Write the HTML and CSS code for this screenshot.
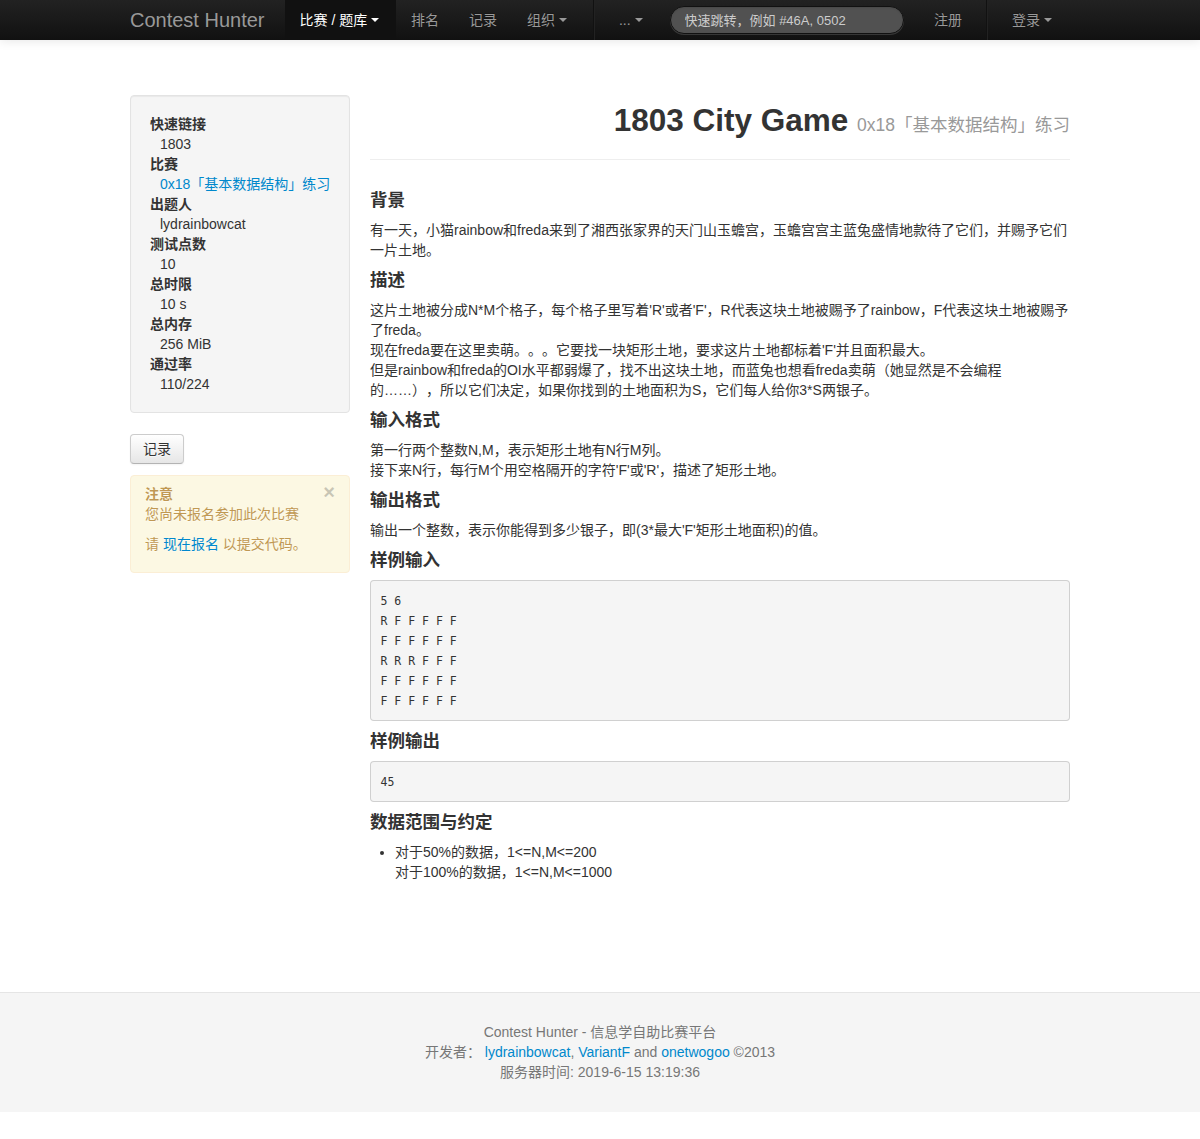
FILE: index.html
```html
<!DOCTYPE html>
<html lang="zh-CN">
<head>
<meta charset="utf-8">
<title>1803 City Game - Contest Hunter</title>
<link rel="stylesheet" href="styles.css">
</head>
<body>
<div class="navbar">
  <div class="nav-inner">
    <a class="brand" href="#">Contest Hunter</a>
    <ul class="nav">
      <li class="active"><a href="#">比赛 / 题库 <b class="caret"></b></a></li>
      <li><a href="#">排名</a></li>
      <li><a href="#">记录</a></li>
      <li><a href="#">组织 <b class="caret"></b></a></li>
      <li class="divider"></li>
      <li><a href="#">... <b class="caret"></b></a></li>
    </ul>
    <form class="search-form"><input class="search-query" type="text" placeholder="快速跳转，例如 #46A, 0502"></form>
    <ul class="nav nav-right">
      <li><a href="#">注册</a></li>
      <li class="divider"></li>
      <li><a href="#">登录 <b class="caret"></b></a></li>
    </ul>
  </div>
</div>

<div class="container">
  <div class="sidebar">
    <div class="well">
      <div class="info-label">快速链接</div>
      <div class="info-value">1803</div>
      <div class="info-label">比赛</div>
      <div class="info-value"><a href="#">0x18「基本数据结构」练习</a></div>
      <div class="info-label">出题人</div>
      <div class="info-value">lydrainbowcat</div>
      <div class="info-label">测试点数</div>
      <div class="info-value">10</div>
      <div class="info-label">总时限</div>
      <div class="info-value">10 s</div>
      <div class="info-label">总内存</div>
      <div class="info-value">256 MiB</div>
      <div class="info-label">通过率</div>
      <div class="info-value">110/224</div>
    </div>
    <div class="btn-row"><a class="btn" href="#">记录</a></div>
    <div class="alert">
      <button class="close" type="button">×</button>
      <strong class="alert-title">注意</strong>
      <div>您尚未报名参加此次比赛</div>
      <p class="alert-p">请 <a href="#">现在报名</a> 以提交代码。</p>
    </div>
  </div>

  <div class="content">
    <div class="page-header">
      <h2>1803 City Game <small>0x18「基本数据结构」练习</small></h2>
    </div>
    <h4>背景</h4>
    <p>有一天，小猫rainbow和freda来到了湘西张家界的天门山玉蟾宫，玉蟾宫宫主蓝兔盛情地款待了它们，并赐予它们一片土地。</p>
    <h4>描述</h4>
    <p>这片土地被分成N*M个格子，每个格子里写着'R'或者'F'，R代表这块土地被赐予了rainbow，F代表这块土地被赐予了freda。<br>现在freda要在这里卖萌。。。它要找一块矩形土地，要求这片土地都标着'F'并且面积最大。<br>但是rainbow和freda的OI水平都弱爆了，找不出这块土地，而蓝兔也想看freda卖萌（她显然是不会编程<br>的……），所以它们决定，如果你找到的土地面积为S，它们每人给你3*S两银子。</p>
    <h4>输入格式</h4>
    <p>第一行两个整数N,M，表示矩形土地有N行M列。<br>接下来N行，每行M个用空格隔开的字符'F'或'R'，描述了矩形土地。</p>
    <h4>输出格式</h4>
    <p>输出一个整数，表示你能得到多少银子，即(3*最大'F'矩形土地面积)的值。</p>
    <h4>样例输入</h4>
    <pre>5 6
R F F F F F
F F F F F F
R R R F F F
F F F F F F
F F F F F F</pre>
    <h4>样例输出</h4>
    <pre>45</pre>
    <h4>数据范围与约定</h4>
    <ul class="constraints">
      <li>对于50%的数据，1&lt;=N,M&lt;=200<br>对于100%的数据，1&lt;=N,M&lt;=1000</li>
    </ul>
  </div>
</div>

<div class="footer">
  <div>Contest Hunter - 信息学自助比赛平台</div>
  <div>开发者： <a href="#">lydrainbowcat</a>, <a href="#">VariantF</a> and <a href="#">onetwogoo</a> ©2013</div>
  <div>服务器时间: 2019-6-15 13:19:36</div>
</div>
</body>
</html>
```
FILE: styles.css
```css
html, body {
  margin: 0;
  padding: 0;
}
body {
  font-family: "Liberation Sans", Arial, "Noto Sans CJK SC", sans-serif;
  font-size: 14px;
  line-height: 20px;
  color: #333;
  background: #fff;
  text-spacing-trim: space-all;
}
a {
  color: #0088cc;
  text-decoration: none;
}

/* navbar */
.navbar {
  height: 40px;
  background: linear-gradient(to bottom, #222222, #111111);
  box-shadow: 0 1px 10px rgba(0, 0, 0, 0.1);
}
.nav-inner {
  width: 940px;
  margin: 0 auto;
  display: flex;
  height: 40px;
}
.brand {
  margin-left: -20px;
  padding: 10px 20px;
  font-size: 20px;
  line-height: 20px;
  color: #999;
}
.nav {
  display: flex;
  list-style: none;
  margin: 0;
  padding: 0;
}
.nav a {
  display: block;
  padding: 10px 15px;
  line-height: 20px;
  color: #999;
  text-shadow: 0 -1px 0 rgba(0, 0, 0, 0.25);
}
.nav .active a {
  padding-right: 17px;
  background: #111;
  color: #fff;
}
.caret {
  display: inline-block;
  width: 0;
  height: 0;
  vertical-align: top;
  margin-top: 8px;
  border-top: 4px solid #999;
  border-left: 4px solid transparent;
  border-right: 4px solid transparent;
}
.nav .active .caret {
  border-top-color: #fff;
}
.nav .divider {
  width: 0;
  height: 40px;
  margin: 0 9px 0 11px;
  border-left: 1px solid #111;
  border-right: 1px solid #222;
}
.nav-right .divider {
  margin: 0 9px;
}
.search-form {
  margin: 6px 0 0 12px;
}
.search-query {
  display: block;
  box-sizing: border-box;
  width: 234px;
  height: 28px;
  margin: 0;
  padding: 4px 14px;
  font-family: "Liberation Sans", Arial, "Noto Sans CJK SC", sans-serif;
  font-size: 13px;
  line-height: 18px;
  color: #fff;
  background: #515151;
  border: 1px solid #111;
  border-radius: 15px;
  box-shadow: inset 0 1px 2px rgba(0, 0, 0, 0.1), 0 1px 0 rgba(255, 255, 255, 0.15);
  outline: none;
}
.search-query::placeholder {
  color: #ccc;
}
.nav-right {
  margin-left: auto;
}
.nav-right li:last-child a {
  padding-right: 18px;
}

/* layout */
.container {
  width: 940px;
  margin: 0 auto;
  padding-top: 55px;
  display: flex;
  gap: 20px;
  align-items: flex-start;
}
.sidebar {
  width: 220px;
  flex: none;
}
.content {
  width: 700px;
  flex: none;
}

/* sidebar */
.well {
  background: #f5f5f5;
  border: 1px solid #e3e3e3;
  border-radius: 4px;
  padding: 18px 19px;
  box-shadow: inset 0 1px 1px rgba(0, 0, 0, 0.05);
}
.info-label {
  font-weight: bold;
  color: #333;
}
.info-value {
  padding-left: 10px;
  color: #333;
  white-space: nowrap;
}
.btn-row {
  margin: 21px 0 11px;
}
.btn {
  display: inline-block;
  padding: 4px 12px;
  font-size: 14px;
  line-height: 20px;
  color: #333;
  text-shadow: 0 1px 1px rgba(255, 255, 255, 0.75);
  background: linear-gradient(to bottom, #ffffff, #e6e6e6);
  border: 1px solid #ccc;
  border-bottom-color: #b3b3b3;
  border-radius: 4px;
  box-shadow: inset 0 1px 0 rgba(255, 255, 255, 0.2), 0 1px 2px rgba(0, 0, 0, 0.05);
}
.alert {
  padding: 8px 35px 8px 14px;
  background: #fcf8e3;
  border: 1px solid #fbeed5;
  border-radius: 4px;
  color: #c09853;
  text-shadow: 0 1px 0 rgba(255, 255, 255, 0.5);
}
.alert-title {
  display: block;
}
.alert-p {
  margin: 10px 0;
}
.close {
  float: right;
  position: relative;
  top: -2px;
  right: -21px;
  padding: 0;
  border: 0;
  background: transparent;
  font-family: "Liberation Sans", Arial, sans-serif;
  font-size: 20px;
  font-weight: bold;
  line-height: 20px;
  color: #000;
  opacity: 0.2;
  text-shadow: 0 1px 0 #fff;
  cursor: pointer;
}

/* content */
.page-header {
  margin: 0 0 30px;
  padding-bottom: 9px;
  border-bottom: 1px solid #eee;
  text-align: right;
}
.page-header h2 {
  margin: 5px 0 10px;
  font-size: 31.5px;
  line-height: 40px;
  font-weight: bold;
  color: #333;
}
.page-header small {
  font-size: 17.5px;
  line-height: 1;
  font-weight: normal;
  color: #999;
}
h4 {
  margin: 10px 0;
  font-size: 17.5px;
  line-height: 20px;
  font-weight: bold;
  color: #333;
}
p {
  margin: 0 0 10px;
}
pre {
  margin: 0 0 10px;
  padding: 9.5px;
  font-family: "DejaVu Sans Mono", "Liberation Mono", monospace;
  font-size: 11.5px;
  line-height: 20px;
  color: #333;
  background: #f5f5f5;
  border: 1px solid rgba(0, 0, 0, 0.15);
  border-radius: 4px;
  white-space: pre-wrap;
}
.constraints {
  margin: 0 0 10px 25px;
  padding: 0;
}

/* footer */
.footer {
  margin-top: 100px;
  padding: 29px 0 30px;
  background: #f5f5f5;
  border-top: 1px solid #e5e5e5;
  text-align: center;
  color: #777;
}
```
